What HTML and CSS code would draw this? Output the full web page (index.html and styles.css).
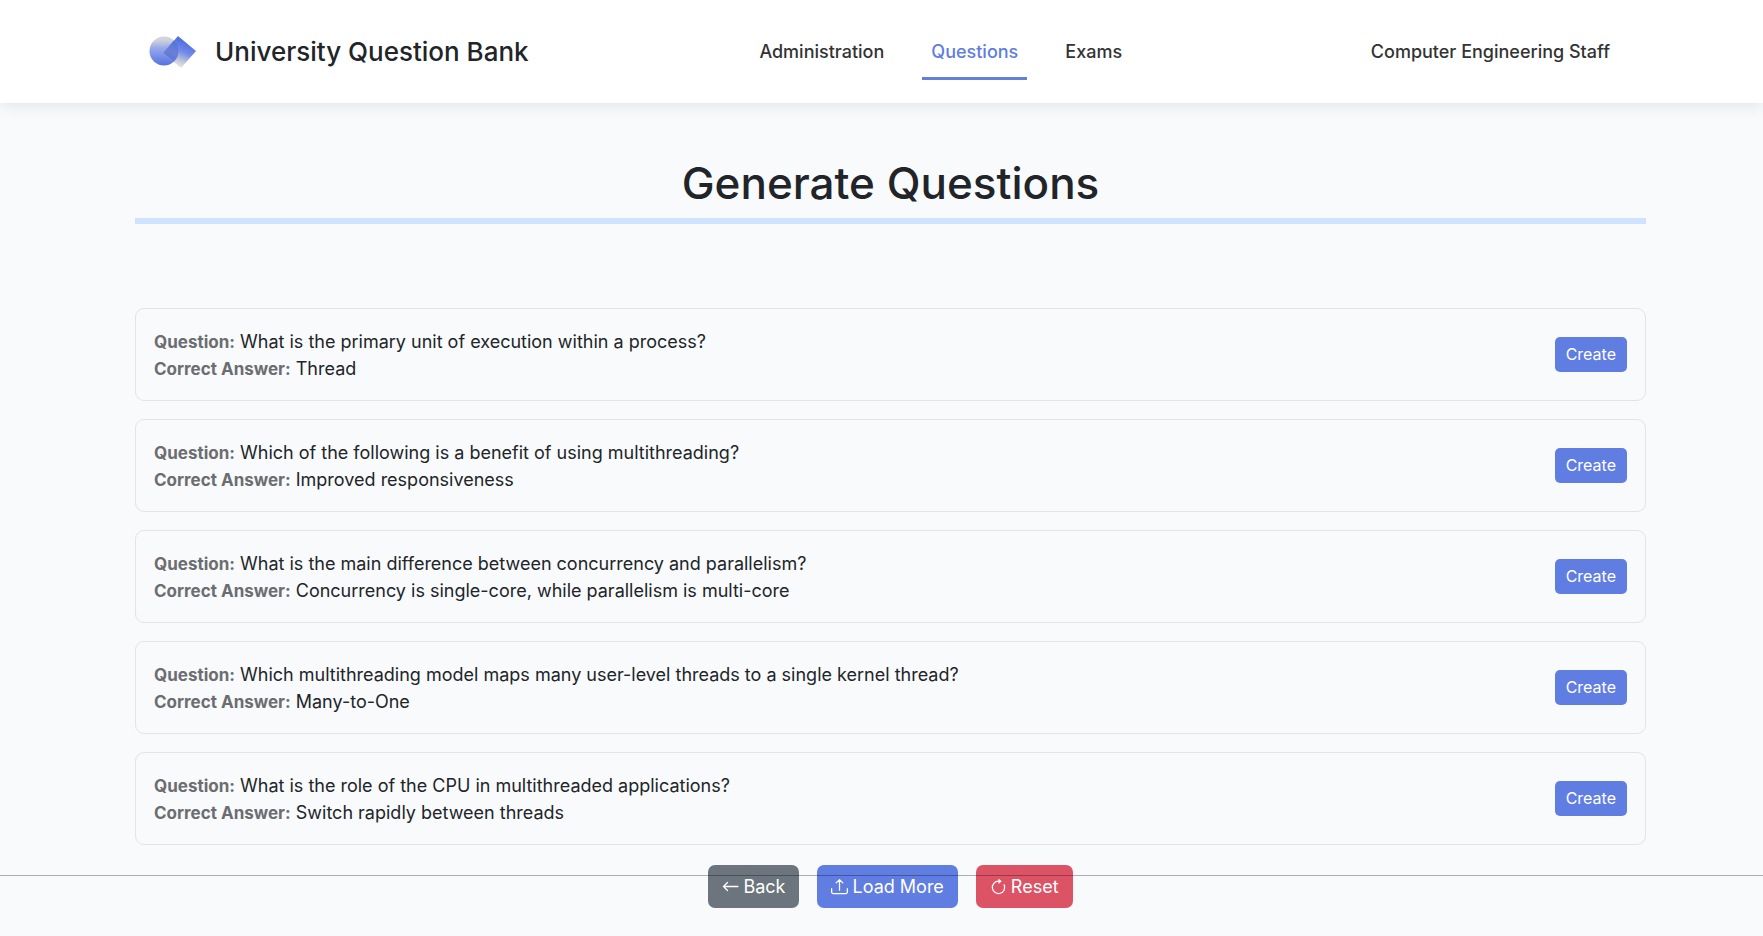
FILE: index.html
```html
<!DOCTYPE html>
<html lang="en">
<head>
<meta charset="utf-8">
<meta name="viewport" content="width=device-width, initial-scale=1">
<title>University Question Bank</title>
<link rel="stylesheet" href="styles.css">
</head>
<body>
<header class="topbar">
  <div class="container topbar-inner">
    <a class="brand" href="#">
      <svg class="brand-logo" viewBox="0 0 50 36" aria-hidden="true">
        <defs>
          <linearGradient id="disc" x1="0" y1="0" x2="0" y2="1">
            <stop offset="0" stop-color="#d6d6da"/>
            <stop offset=".15" stop-color="#cccfdc"/>
            <stop offset=".4" stop-color="#98a8ea"/>
            <stop offset="1" stop-color="#5573e2"/>
          </linearGradient>
          <linearGradient id="tile" gradientUnits="userSpaceOnUse" x1="40" y1="9" x2="30" y2="32">
            <stop offset="0" stop-color="#5271de"/>
            <stop offset=".4" stop-color="#728aeb"/>
            <stop offset=".8" stop-color="#c9cbd8"/>
            <stop offset="1" stop-color="#e4e4e6"/>
          </linearGradient>
          <linearGradient id="lens" gradientUnits="userSpaceOnUse" x1="20" y1="28" x2="31" y2="8">
            <stop offset="0" stop-color="#5875e2"/>
            <stop offset=".5" stop-color="#6a80d4"/>
            <stop offset="1" stop-color="#5371de"/>
          </linearGradient>
          <clipPath id="disc-area"><circle cx="16" cy="17" r="14.5"/></clipPath>
        </defs>
        <circle cx="16" cy="17" r="14.5" fill="url(#disc)"/>
        <path d="M30 2L48 17L33 34L15 19Z" fill="url(#tile)"/>
        <path d="M30 2L48 17L33 34L15 19Z" fill="url(#lens)" clip-path="url(#disc-area)"/>
      </svg>
      <span>University Question Bank</span>
    </a>
    <nav class="nav" aria-label="Main">
      <a class="nav-link" href="#">Administration</a>
      <a class="nav-link active" href="#" aria-current="page">Questions</a>
      <a class="nav-link" href="#">Exams</a>
    </nav>
    <a class="account" href="#">Computer Engineering Staff</a>
  </div>
</header>
<main class="page">
  <div class="container">
    <h1 class="page-title">Generate Questions</h1>
    <ul class="question-list">
      <li class="question">
        <div><p><strong>Question:</strong> What is the primary unit of execution within a process?</p>
        <p><strong>Correct Answer:</strong> Thread</p></div>
        <button class="btn btn-small" type="button">Create</button>
      </li>
      <li class="question">
        <div><p><strong>Question:</strong> Which of the following is a benefit of using multithreading?</p>
        <p><strong>Correct Answer:</strong> Improved responsiveness</p></div>
        <button class="btn btn-small" type="button">Create</button>
      </li>
      <li class="question">
        <div><p><strong>Question:</strong> What is the main difference between concurrency and parallelism?</p>
        <p><strong>Correct Answer:</strong> Concurrency is single-core, while parallelism is multi-core</p></div>
        <button class="btn btn-small" type="button">Create</button>
      </li>
      <li class="question">
        <div><p><strong>Question:</strong> Which multithreading model maps many user-level threads to a single kernel thread?</p>
        <p><strong>Correct Answer:</strong> Many-to-One</p></div>
        <button class="btn btn-small" type="button">Create</button>
      </li>
      <li class="question">
        <div><p><strong>Question:</strong> What is the role of the CPU in multithreaded applications?</p>
        <p><strong>Correct Answer:</strong> Switch rapidly between threads</p></div>
        <button class="btn btn-small" type="button">Create</button>
      </li>
    </ul>
    <div class="actions">
      <button class="btn btn-back" type="button">
        <svg class="icon" viewBox="0 0 16 16" aria-hidden="true"><path d="M15 8H1.5M5.2 4.2L1.4 8L5.2 11.8"/></svg>
        Back
      </button>
      <button class="btn btn-load" type="button">
        <svg class="icon" viewBox="0 0 16 16" aria-hidden="true"><path d="M.6 10v3.2a1.4 1.4 0 0 0 1.4 1.4h12a1.4 1.4 0 0 0 1.4-1.4V10M8 11.5V1.6M4.9 4.6L8 1.5L11.1 4.6"/></svg>
        Load More
      </button>
      <button class="btn btn-reset" type="button">
        <svg class="icon" viewBox="0 0 16 16" aria-hidden="true"><path d="M8 3a5.8 5.8 0 1 0 5.3 3.4"/><path class="solid" d="M8 .4v5.2L11 3Z"/></svg>
        Reset
      </button>
    </div>
  </div>
</main>
<footer class="footer-line"></footer>
</body>
</html>
```

FILE: styles.css
```css
* { box-sizing: border-box; }
body {
  margin: 0;
  min-height: 100vh;
  background: #f9fafc;
  color: #212529;
  font: 18px/27px Inter, "Liberation Sans", sans-serif;
}
p, h1, ul { margin: 0; padding: 0; }
a { color: inherit; text-decoration: none; }
.topbar, .page { padding-left: 18px; }
.container { width: 87%; max-width: 1511px; margin: 0 auto; }
.topbar {
  background: #fff;
  box-shadow: 0 2px 16px rgba(0, 0, 0, .1);
}
.topbar-inner {
  display: flex;
  justify-content: space-between;
  align-items: center;
  min-height: 103px;
  padding: 0 18px 0 13px;
}
.brand {
  display: flex;
  align-items: center;
  gap: 17px;
  font-size: 26px;
  font-weight: 500;
  white-space: nowrap;
}
.brand-logo { width: 50px; height: 36px; }
.nav { display: flex; gap: 29px; }
.nav-link {
  padding: 12px 9px;
  border-bottom: 3px solid transparent;
  border-top: 3px solid transparent;
  font-weight: 500;
  color: #333;
}
.nav-link.active { color: #5f7de2; border-bottom-color: #6480d6; }
.account { padding: 0 18px; font-weight: 500; color: #333; white-space: nowrap; }
.page-title {
  margin-top: 50px;
  padding-bottom: 5px;
  border-bottom: 6px solid #cfe2ff;
  font-size: 44px;
  line-height: 60px;
  font-weight: 500;
  text-align: center;
}
.question-list {
  display: grid;
  gap: 18px;
  margin-top: 84px;
  list-style: none;
}
.question {
  display: flex;
  align-items: center;
  justify-content: space-between;
  gap: 18px;
  min-height: 93px;
  padding: 18px;
  border: 1px solid #e2e4e7;
  border-radius: 9px;
}
.question strong { color: #6b6d70; font-size: 17px; font-weight: 700; line-height: 17px; }
.btn {
  display: flex;
  align-items: center;
  justify-content: center;
  gap: 4px;
  padding: 8px 14px;
  border: 0;
  border-radius: 7px;
  background: #607de2;
  color: #fff;
  font: inherit;
}
.btn-small { padding: 4px 11px; border-radius: 5px; font-size: 16px; }
.actions {
  display: flex;
  justify-content: center;
  gap: 18px;
  margin: 20px 0;
}
.btn-back { background: #6c757d; }
.btn-reset { background: #dd5366; }
.icon {
  width: 17px;
  height: 17px;
  fill: none;
  stroke: currentColor;
  stroke-width: 1.2;
  stroke-linecap: round;
  stroke-linejoin: round;
}
.icon .solid { fill: currentColor; stroke: none; }
.footer-line {
  position: absolute;
  right: 0;
  bottom: 0;
  left: 0;
  height: 61px;
  border-top: 1px solid rgba(0, 0, 0, .3);
  pointer-events: none;
}
```
